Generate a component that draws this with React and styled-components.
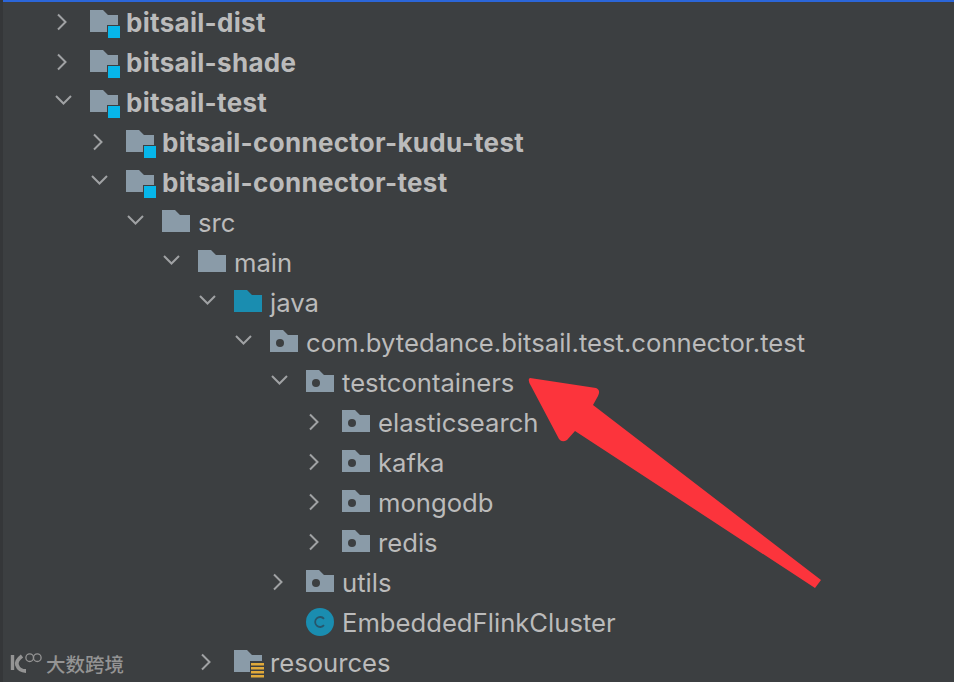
import styled, { createGlobalStyle } from 'styled-components'

const GlobalStyle = createGlobalStyle`
    html, body {
        margin: 0;
        padding: 0;
        background: #3c3f41;
    }
`

const linhas = [
    { nivel: 0, nome: 'bitsail-dist', icone: 'modulo', seta: 'fechada' },
    { nivel: 0, nome: 'bitsail-shade', icone: 'modulo', seta: 'fechada' },
    { nivel: 0, nome: 'bitsail-test', icone: 'modulo', seta: 'aberta' },
    { nivel: 1, nome: 'bitsail-connector-kudu-test', icone: 'modulo', seta: 'fechada' },
    { nivel: 1, nome: 'bitsail-connector-test', icone: 'modulo', seta: 'aberta' },
    { nivel: 2, nome: 'src', icone: 'pasta', seta: 'aberta' },
    { nivel: 3, nome: 'main', icone: 'pasta', seta: 'aberta' },
    { nivel: 4, nome: 'java', icone: 'fonte', seta: 'aberta' },
    { nivel: 5, nome: 'com.bytedance.bitsail.test.connector.test', icone: 'pacote', seta: 'aberta' },
    { nivel: 6, nome: 'testcontainers', icone: 'pacote', seta: 'aberta' },
    { nivel: 7, nome: 'elasticsearch', icone: 'pacote', seta: 'fechada' },
    { nivel: 7, nome: 'kafka', icone: 'pacote', seta: 'fechada' },
    { nivel: 7, nome: 'mongodb', icone: 'pacote', seta: 'fechada' },
    { nivel: 7, nome: 'redis', icone: 'pacote', seta: 'fechada' },
    { nivel: 6, nome: 'utils', icone: 'pacote', seta: 'fechada' },
    { nivel: 6, nome: 'EmbeddedFlinkCluster', icone: 'classe' },
    { nivel: 4, nome: 'resources', icone: 'recursos', seta: 'fechada' },
]

const PASTA = 'M0 0H13L18 5H28V22H0Z'
const PASTA_COM_CORTE = 'M0 0H13L18 5H28V15H17V22H0Z'
const PASTA_RECURSOS = 'M0 0H13L18 5H28V11H16V22H0Z'

const Seta = ({ tipo }) => {
    if (tipo === 'aberta') {
        return (
            <SetaSvg width="20" height="40" viewBox="0 0 20 40">
                <path d="M2 13L9.5 20.5L17 13" />
            </SetaSvg>
        )
    }
    if (tipo === 'fechada') {
        return (
            <SetaSvg width="20" height="40" viewBox="0 0 20 40">
                <path d="M4 11.5L11.5 19L4 26.5" />
            </SetaSvg>
        )
    }
    return <SetaVazia />
}

const Icone = ({ tipo }) => {
    if (tipo === 'classe') {
        return (
            <IconeClasse width="30" height="30" viewBox="0 0 30 30">
                <circle cx="14" cy="14" r="14" fill="#1a8db0" />
                <path d="M18 10.8A5 5 0 1 0 18 17.2" fill="none" stroke="#27566b" strokeWidth="1.8" />
            </IconeClasse>
        )
    }
    if (tipo === 'modulo') {
        return (
            <svg width="30" height="28" viewBox="0 0 30 28">
                <path d={PASTA_COM_CORTE} fill="#8a9ba8" />
                <rect x="18" y="16" width="12" height="12" fill="#06b6ea" />
            </svg>
        )
    }
    if (tipo === 'recursos') {
        return (
            <svg width="30" height="28" viewBox="0 0 30 28">
                <path d={PASTA_RECURSOS} fill="#8a9ba8" />
                <rect x="17" y="13" width="13" height="2.5" fill="#e0a93a" />
                <rect x="17" y="17" width="13" height="2.5" fill="#e0a93a" />
                <rect x="17" y="21" width="13" height="2.5" fill="#e0a93a" />
                <rect x="17" y="25" width="13" height="2.5" fill="#e0a93a" />
            </svg>
        )
    }
    return (
        <svg width="30" height="28" viewBox="0 0 30 28">
            <path d={PASTA} fill={tipo === 'fonte' ? '#1a8db0' : '#8a9ba8'} />
            {tipo === 'pacote' && <circle cx="10" cy="13" r="4" fill="#3c3f41" />}
        </svg>
    )
}

const App = () => {
    return (
        <Tela>
            <GlobalStyle />
            <BarraAzul />
            <Arvore>
                {linhas.map((linha) => (
                    <Linha $nivel={linha.nivel} key={linha.nome}>
                        <Seta tipo={linha.seta} />
                        <CaixaIcone>
                            <Icone tipo={linha.icone} />
                        </CaixaIcone>
                        <Nome $negrito={linha.icone === 'modulo'}>{linha.nome}</Nome>
                    </Linha>
                ))}
            </Arvore>

            <Flecha width="954" height="682" viewBox="0 0 954 682">
                <path
                    d="M530 378L596 388Q601 390 598 396L593 405L821 580L815 588L575 431L567 440Q562 443 559 439L531 386Q527 379 530 378Z"
                    fill="#fc343c"
                />
            </Flecha>

            <MarcaDagua>
                <svg width="36" height="26" viewBox="0 0 36 26">
                    <path d="M4.5 4V19" fill="none" stroke="#949494" strokeWidth="3.4" />
                    <path d="M14 5Q7.5 10 9 14Q11 20 18 20" fill="none" stroke="#949494" strokeWidth="3.8" />
                    <circle cx="21.7" cy="6.7" r="3.8" fill="none" stroke="#949494" strokeWidth="1.3" />
                    <circle cx="29.3" cy="6.7" r="3.8" fill="none" stroke="#949494" strokeWidth="1.3" />
                </svg>
                <span>大数跨境</span>
            </MarcaDagua>
        </Tela>
    )
}

const Tela = styled.div`
    position: relative;
    width: 954px;
    height: 682px;
    overflow: hidden;
    background: #3c3f41;
    border-left: 3px solid #353739;
    box-sizing: border-box;
`

const BarraAzul = styled.div`
    height: 2px;
    margin-left: -3px;
    background: #2b66d9;
`

const Arvore = styled.ul`
    list-style: none;
    margin: 1px 0 0;
    padding: 0;
`

const Linha = styled.li`
    display: flex;
    align-items: center;
    height: 40px;
    padding-left: ${(props) => 51 + props.$nivel * 36}px;
    white-space: nowrap;
`

const SetaSvg = styled.svg`
    flex: none;
    margin-right: 16px;

    path {
        fill: none;
        stroke: #a0a2a4;
        stroke-width: 2;
    }
`

const SetaVazia = styled.div`
    flex: none;
    width: 36px;
`

const CaixaIcone = styled.div`
    flex: none;
    display: flex;
    width: 36px;
    height: 28px;
    margin-top: 2px;
`

const IconeClasse = styled.svg`
    margin-top: -2px;
`

const Nome = styled.span`
    font-family: "Inter", "Liberation Sans", sans-serif;
    font-size: ${(props) => (props.$negrito ? '26px' : '25.65px')};
    letter-spacing: ${(props) => (props.$negrito ? '0.3px' : '0')};
    font-weight: ${(props) => (props.$negrito ? 700 : 400)};
    line-height: 40px;
    color: #bbbbbb;
`

const Flecha = styled.svg`
    position: absolute;
    top: 0;
    left: -3px;
    pointer-events: none;
`

const MarcaDagua = styled.div`
    position: absolute;
    left: 5px;
    top: 650px;
    display: flex;
    align-items: center;
    gap: 2px;

    span {
        font-family: "Noto Sans CJK SC", sans-serif;
        font-size: 19.5px;
        font-weight: 500;
        line-height: 28px;
        color: #949494;
    }
`

export default App
